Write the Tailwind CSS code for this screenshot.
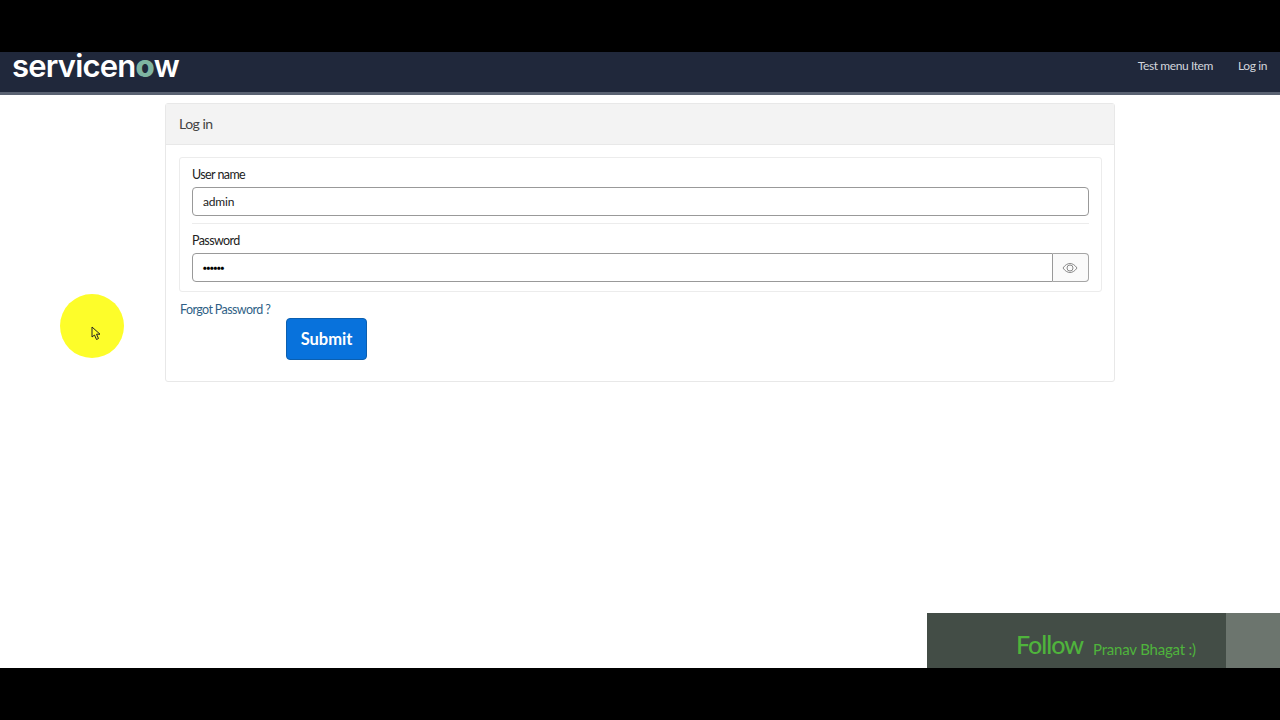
<!DOCTYPE html>
<html lang="en">
<head>
  <meta charset="UTF-8" />
  <title>Log in</title>
  <script src="https://cdn.jsdelivr.net/npm/@tailwindcss/browser@4"></script>
</head>
<body class="bg-black font-['Lato','Noto_Sans',sans-serif] text-[#222]">
  <div class="relative h-[720px] w-[1280px] overflow-hidden py-[52px]">
    <div class="h-[616px] bg-white">
      <!-- header -->
      <header class="flex h-[43px] items-start justify-between border-b-[3px] border-[#5a6272] bg-[#20283b] pl-3 pr-[13px]">
        <a class="mt-[-4px] text-[31px] leading-[36px] font-semibold tracking-[-0.8px] text-white font-['Inter',sans-serif]">servicen<span class="font-extrabold text-[#7fb5a2]">o</span>w</a>
        <nav class="mt-[6px] flex gap-[25px] text-[12px] leading-[16px] tracking-[-0.4px] text-[#d3d6dd]">
          <a>Test menu Item</a>
          <a>Log in</a>
        </nav>
      </header>

      <!-- login panel -->
      <div class="ml-[165px] mt-2 h-[279px] w-[950px] rounded-[3px] border border-[#e8e8e8] bg-white">
        <div class="flex h-[41px] items-center border-b border-[#e8e8e8] bg-[#f3f3f3] px-[13px] text-sm tracking-[-0.5px] text-[#444]">Log in</div>
        <div class="pl-[13px] pr-[12px] pt-3">
          <div class="rounded-[3px] border border-[#ececec] px-[12px]">
            <div class="border-b border-[#ececec] pt-[9px] pb-[7px]">
              <label class="block text-[12.5px] leading-[16px] tracking-[-0.6px]">User name</label>
              <div class="mt-[4px] flex h-[29px] items-center rounded-[4px] border border-[#999] px-[10px] text-[12px] tracking-[-0.2px] text-[#222]">admin</div>
            </div>
            <div class="pt-[9px] pb-[9px]">
              <label class="block text-[12.5px] leading-[16px] tracking-[-0.6px]">Password</label>
              <div class="mt-[4px] flex h-[29px]">
                <div class="flex flex-1 items-center rounded-l-[4px] border border-[#999] px-[10px] text-[6.5px] tracking-[-0.4px] text-black">●●●●●●</div>
                <button class="flex w-[36px] items-center justify-center rounded-r-[4px] border border-l-0 border-[#a5a5a5] bg-[#fafafa] pr-px">
                  <svg width="16" height="12" viewBox="0 0 16 12" fill="none" stroke="#8a8a8a" stroke-width="1">
                    <path d="M1 6c2-3 4.500-4.500 7-4.500S13 3 15 6c-2 3-4.500 4.500-7 4.500S3 9 1 6z" />
                    <circle cx="8" cy="6" r="3" />
                  </svg>
                </button>
              </div>
            </div>
          </div>
          <div class="mt-[10px] flex items-start">
            <a class="w-[107px] pl-px text-[12.5px] leading-[16px] tracking-[-0.6px] text-[#2f5f86]">Forgot Password ?</a>
            <button class="mt-[16px] h-[42px] w-[81px] rounded-[4px] border border-[#0b5fb0] bg-[#0872dc] text-[16.5px] font-bold text-white">Submit</button>
          </div>
        </div>
      </div>
    </div>

    <!-- cursor highlight from the recording -->
    <div class="absolute left-[60px] top-[294px] flex h-[64px] w-[64px] items-center justify-center rounded-full bg-[#fdfd2a] blur-[0.5px]">
      <svg class="ml-[7px] mt-[14px]" width="10" height="15" viewBox="0 0 10 15" fill="#fdfd2a" stroke="#222" stroke-width="1">
        <path d="M1 1v10l2.500-2 2 4.500 2-1-2-4.300H9z" />
      </svg>
    </div>

    <!-- follow banner over the video -->
    <div class="absolute left-[927px] top-[613px] flex h-[55px] w-[353px]">
      <div class="flex w-[299px] items-center bg-[#434d46] pl-[89px] pt-2 text-[#4fb43c]">
        <span class="text-[25px] font-medium tracking-[-1px]">Follow</span>
        <span class="ml-[10px] mt-[9px] text-[15px] tracking-[-0.2px]">Pranav Bhagat :)</span>
      </div>
      <div class="flex-1 bg-[#6c756e]"></div>
    </div>
  </div>
</body>
</html>
